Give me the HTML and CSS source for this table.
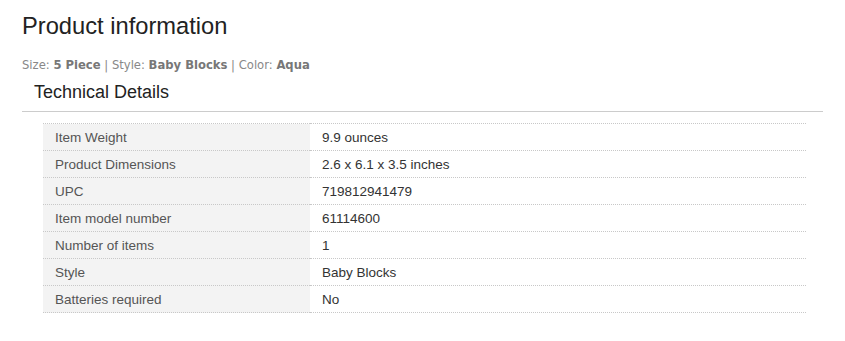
FILE: index.html
```html
<!DOCTYPE html>
<html>
<head>
<meta charset="utf-8">
<link rel="stylesheet" href="styles.css">
</head>
<body>
<div class="page">
  <h1 class="title">Product information</h1>
  <div class="variation">
    <span class="lbl">Size:</span> <b>5 Piece</b> <span class="sep">|</span> <span class="lbl">Style:</span> <b>Baby Blocks</b> <span class="sep">|</span> <span class="lbl">Color:</span> <b>Aqua</b>
  </div>
  <div class="section">
    <h2 class="section-title">Technical Details</h2>
    <table class="details">
      <tr><th>Item Weight</th><td>9.9 ounces</td></tr>
      <tr><th>Product Dimensions</th><td>2.6 x 6.1 x 3.5 inches</td></tr>
      <tr><th>UPC</th><td>719812941479</td></tr>
      <tr><th>Item model number</th><td>61114600</td></tr>
      <tr><th>Number of items</th><td>1</td></tr>
      <tr><th>Style</th><td>Baby Blocks</td></tr>
      <tr><th>Batteries required</th><td>No</td></tr>
    </table>
  </div>
</div>
</body>
</html>
```
FILE: styles.css
```css
html, body {
  margin: 0;
  padding: 0;
  background: #fff;
}
.page {
  padding: 11px 22px 0 22px;
  font-family: "Liberation Sans", Arial, sans-serif;
}
.title {
  margin: 0;
  font-size: 23.7px;
  font-weight: normal;
  line-height: 30px;
  color: #222;
}
.variation {
  margin-top: 17px;
  font-family: "DejaVu Sans", Verdana, sans-serif;
  font-size: 11.6px;
  line-height: 15px;
  color: #888;
}
.variation b {
  color: #777;
  font-weight: bold;
}
.section-title {
  margin: 0;
  padding: 8px 0 8px 12px;
  font-size: 18px;
  font-weight: normal;
  line-height: 22px;
  color: #222;
  border-bottom: 1px solid #ccc;
}
.details {
  margin: 11px 17px 0 21px;
  width: calc(100% - 38px);
  border-collapse: collapse;
  font-size: 13.5px;
}
.details th, .details td {
  height: 26px;
  padding: 0 12px;
  border-top: 1px dotted #c8c8c8;
  border-bottom: 1px dotted #c8c8c8;
  text-align: left;
  font-weight: normal;
  vertical-align: middle;
}
.details th {
  width: 243px;
  background: #f3f3f3;
  color: #555;
}
.details td {
  color: #333;
}
```
